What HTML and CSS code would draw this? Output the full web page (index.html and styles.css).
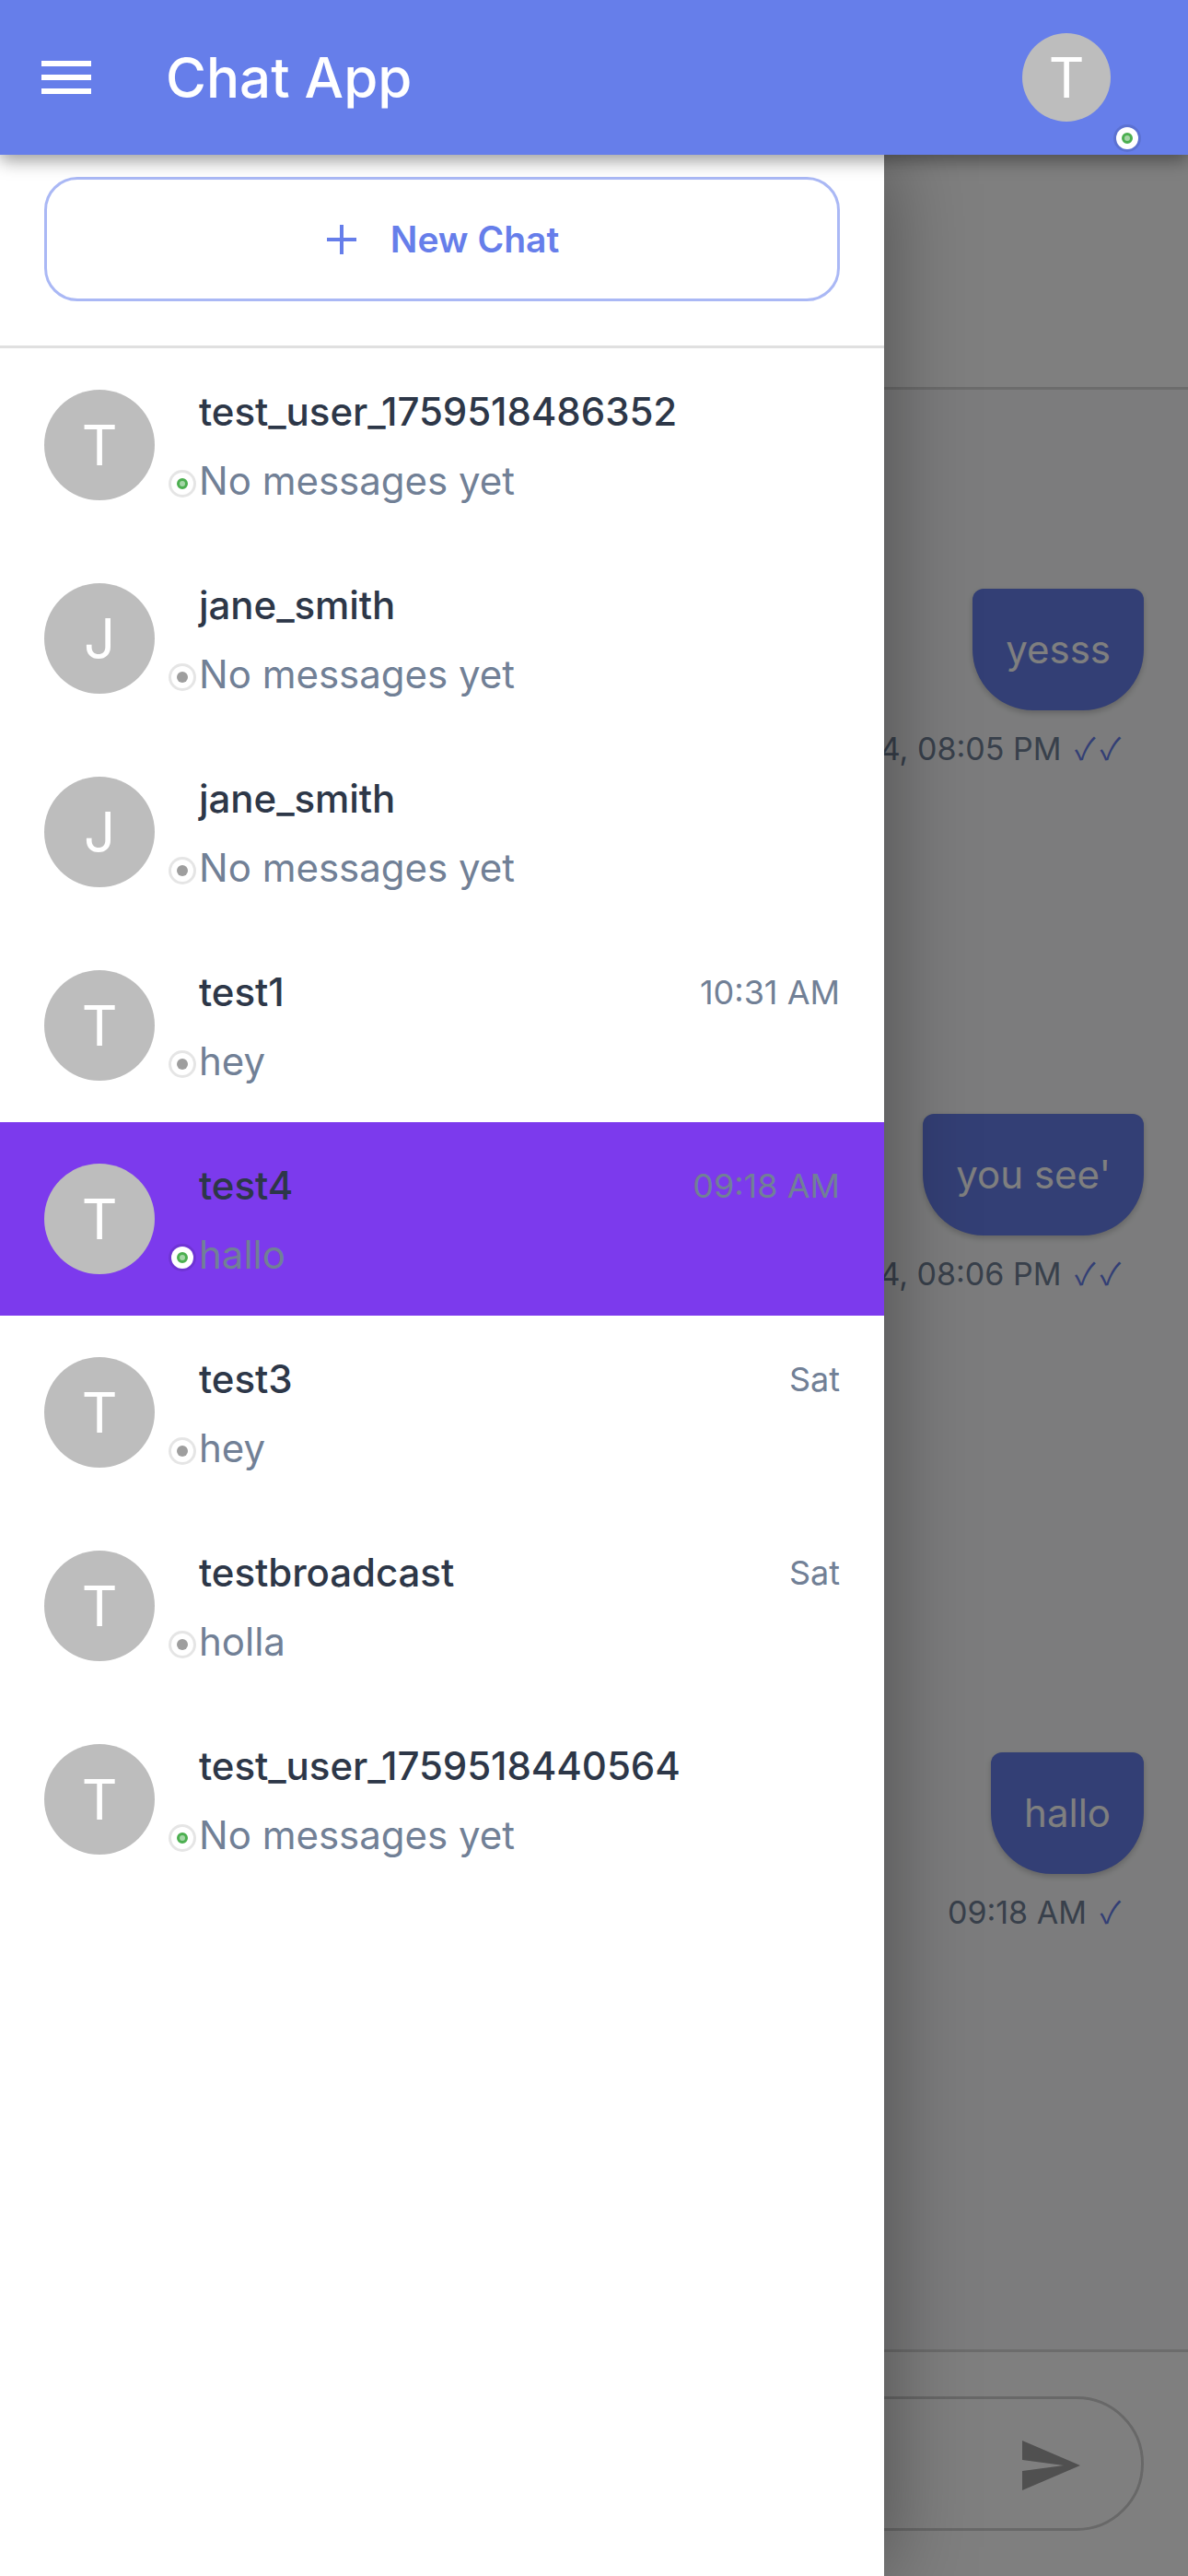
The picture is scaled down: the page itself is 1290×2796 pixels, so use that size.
FILE: index.html
```html
<!DOCTYPE html>
<html lang="en">
<head>
    <meta charset="UTF-8">
    <meta name="viewport" content="width=device-width, initial-scale=1.0">
    <title>Chat App</title>
    <link rel="stylesheet" href="styles.css">
</head>
<body>
    <div class="app">
        <header class="topbar">
            <div class="menu-btn">
                <span class="menu-line"></span>
                <span class="menu-line"></span>
                <span class="menu-line"></span>
            </div>
            <div class="topbar-title">Chat App</div>
            <div class="avatar">T</div>
            <span class="status status-online status-top"><i></i></span>
        </header>

        <div class="chat">
            <div class="chat-head"></div>
            <div class="messages">
                <div class="msg msg-1">
                    <div class="bubble">yesss</div>
                    <div class="meta">4, 08:05 PM <span class="ticks">✓✓</span></div>
                </div>
                <div class="msg msg-2">
                    <div class="bubble">you see'</div>
                    <div class="meta">4, 08:06 PM <span class="ticks">✓✓</span></div>
                </div>
                <div class="msg msg-3">
                    <div class="bubble">hallo</div>
                    <div class="meta">09:18 AM <span class="ticks">✓</span></div>
                </div>
            </div>
            <div class="composer">
                <div class="input-pill">
                    <svg class="send-icon" viewBox="0 0 24 24"><path d="M2.01 21L23 12 2.01 3 2 10l15 2-15 2z"/></svg>
                </div>
            </div>
        </div>

        <div class="backdrop"></div>

        <aside class="drawer">
            <div class="new-chat-wrap">
                <div class="new-chat">
                    <svg class="plus-icon" viewBox="0 0 32 32"><path d="M14 0h4v14h14v4H18v14h-4V18H0v-4h14z"/></svg>
                    <span>New Chat</span>
                </div>
            </div>
            <div class="chat-list">
                <div class="chat-row">
                    <div class="avatar avatar-list">T</div>
                    <div class="row-body">
                        <div class="row-top"><span class="row-name">test_user_1759518486352</span></div>
                        <div class="row-bottom"><span class="status status-online"><i></i></span><span class="row-last">No messages yet</span></div>
                    </div>
                </div>
                <div class="chat-row">
                    <div class="avatar avatar-list">J</div>
                    <div class="row-body">
                        <div class="row-top"><span class="row-name">jane_smith</span></div>
                        <div class="row-bottom"><span class="status"><i></i></span><span class="row-last">No messages yet</span></div>
                    </div>
                </div>
                <div class="chat-row">
                    <div class="avatar avatar-list">J</div>
                    <div class="row-body">
                        <div class="row-top"><span class="row-name">jane_smith</span></div>
                        <div class="row-bottom"><span class="status"><i></i></span><span class="row-last">No messages yet</span></div>
                    </div>
                </div>
                <div class="chat-row">
                    <div class="avatar avatar-list">T</div>
                    <div class="row-body">
                        <div class="row-top"><span class="row-name">test1</span><span class="row-time">10:31 AM</span></div>
                        <div class="row-bottom"><span class="status"><i></i></span><span class="row-last">hey</span></div>
                    </div>
                </div>
                <div class="chat-row active">
                    <div class="avatar avatar-list">T</div>
                    <div class="row-body">
                        <div class="row-top"><span class="row-name">test4</span><span class="row-time">09:18 AM</span></div>
                        <div class="row-bottom"><span class="status status-online"><i></i></span><span class="row-last">hallo</span></div>
                    </div>
                </div>
                <div class="chat-row">
                    <div class="avatar avatar-list">T</div>
                    <div class="row-body">
                        <div class="row-top"><span class="row-name">test3</span><span class="row-time">Sat</span></div>
                        <div class="row-bottom"><span class="status"><i></i></span><span class="row-last">hey</span></div>
                    </div>
                </div>
                <div class="chat-row">
                    <div class="avatar avatar-list">T</div>
                    <div class="row-body">
                        <div class="row-top"><span class="row-name">testbroadcast</span><span class="row-time">Sat</span></div>
                        <div class="row-bottom"><span class="status"><i></i></span><span class="row-last">holla</span></div>
                    </div>
                </div>
                <div class="chat-row">
                    <div class="avatar avatar-list">T</div>
                    <div class="row-body">
                        <div class="row-top"><span class="row-name">test_user_1759518440564</span></div>
                        <div class="row-bottom"><span class="status status-online"><i></i></span><span class="row-last">No messages yet</span></div>
                    </div>
                </div>
            </div>
        </aside>
    </div>
</body>
</html>
```

FILE: styles.css
```css
* {
    box-sizing: border-box;
}

body {
    margin: 0;
    font-family: Inter, "Liberation Sans", sans-serif;
    background: #fff;
}

.app {
    position: relative;
    width: 1290px;
    height: 2796px;
    overflow: hidden;
    display: flex;
    flex-direction: column;
}

/* top bar */
.topbar {
    position: relative;
    z-index: 3;
    flex: none;
    height: 168px;
    display: flex;
    align-items: center;
    padding: 0 84px 0 45px;
    background: #667eea;
    box-shadow: 0 6px 18px rgba(0, 0, 0, 0.4);
}

.menu-btn {
    width: 54px;
    height: 36px;
    display: flex;
    flex-direction: column;
    justify-content: space-between;
}

.menu-line {
    height: 6px;
    background: #fff;
}

.topbar-title {
    flex: 1;
    margin-left: 81px;
    font-size: 60px;
    font-weight: 500;
    color: #fff;
}

/* chat behind the drawer */
.chat {
    flex: 1;
    display: flex;
    flex-direction: column;
    min-height: 0;
}

.chat-head {
    flex: none;
    height: 255px;
    border-bottom: 3px solid #d8d8d8;
}

.messages {
    flex: 1;
    padding: 216px 48px 0 0;
    display: flex;
    flex-direction: column;
    align-items: flex-end;
    background: #f8f9fa;
}

.msg {
    display: flex;
    flex-direction: column;
    align-items: flex-end;
}

.msg-2 {
    margin-top: 377px;
}

.msg-3 {
    margin-top: 500px;
}

.bubble {
    padding: 42px 36px;
    font-size: 42px;
    line-height: 48px;
    color: #fff;
    background: #667eea;
    border-radius: 12px 12px 66px 66px;
    box-shadow: 0 3px 6px rgba(0, 0, 0, 0.2);
}

.meta {
    margin: 22px 20px 0 0;
    font-size: 34px;
    line-height: 39px;
    color: #718096;
    white-space: nowrap;
}

.ticks {
    margin-left: 5px;
    font-family: "Noto Sans CJK SC", sans-serif;
    font-size: 33px;
    line-height: 1;
    letter-spacing: 5px;
    color: #667eea;
}

.composer {
    flex: none;
    height: 246px;
    padding: 48px 48px 0 0;
    background: #fff;
    border-top: 3px solid #d8d8d8;
}

.input-pill {
    height: 146px;
    margin-left: 600px;
    display: flex;
    justify-content: flex-end;
    align-items: center;
    padding: 4px 63px 0 0;
    border: 3px solid #d0d0d0;
    border-radius: 73px;
}

.send-icon {
    width: 72px;
    height: 72px;
    fill: #a0a0a0;
}

/* dim layer and drawer */
.backdrop {
    position: absolute;
    inset: 0;
    z-index: 1;
    background: rgba(0, 0, 0, 0.5);
}

.drawer {
    position: absolute;
    left: 0;
    top: 168px;
    bottom: 0;
    z-index: 2;
    width: 960px;
    background: #fff;
    box-shadow: 0 0 90px rgba(0, 0, 0, 0.4);
}

.new-chat-wrap {
    height: 210px;
    padding: 24px 48px 0;
    border-bottom: 3px solid #e0e0e0;
}

.new-chat {
    height: 135px;
    display: flex;
    align-items: center;
    justify-content: center;
    gap: 37px;
    padding-left: 2px;
    border: 3px solid #aab8f5;
    border-radius: 36px;
    font-size: 39px;
    font-weight: 600;
    color: #667eea;
}

.plus-icon {
    width: 32px;
    height: 32px;
    fill: #667eea;
}

.chat-row {
    height: 210px;
    display: flex;
    align-items: center;
    padding: 0 48px;
}

.chat-row.active {
    background: #7c3aed;
}

.avatar {
    flex: none;
    width: 96px;
    height: 96px;
    display: flex;
    align-items: center;
    justify-content: center;
    border-radius: 50%;
    background: #bdbdbd;
    color: #fff;
    font-size: 60px;
}

.avatar-list {
    width: 120px;
    height: 120px;
}

.row-body {
    flex: 1;
    min-width: 0;
    margin-left: 48px;
    padding-top: 2px;
}

.row-top {
    display: flex;
    justify-content: space-between;
    align-items: center;
    height: 57px;
}

.row-name {
    font-size: 42px;
    font-weight: 500;
    letter-spacing: -0.06px;
    color: #2d3748;
}

.row-time {
    font-size: 36px;
    color: #718096;
}

.row-bottom {
    position: relative;
    margin-top: 18px;
    font-size: 42px;
    line-height: 57px;
    color: #718096;
}

.status {
    position: absolute;
    left: -30px;
    top: 20px;
    width: 24px;
    height: 24px;
    display: flex;
    align-items: center;
    justify-content: center;
    border-radius: 50%;
    background: #fff;
    box-shadow: 0 0 0 3px rgba(0, 0, 0, 0.1);
}

.status.status-top {
    left: 1212px;
    top: 138px;
}

.status i {
    width: 12px;
    height: 12px;
    border-radius: 50%;
    background: #9e9e9e;
}

.status-online i {
    background: #a5d6a7;
    border: 3px solid #4caf50;
}
```
